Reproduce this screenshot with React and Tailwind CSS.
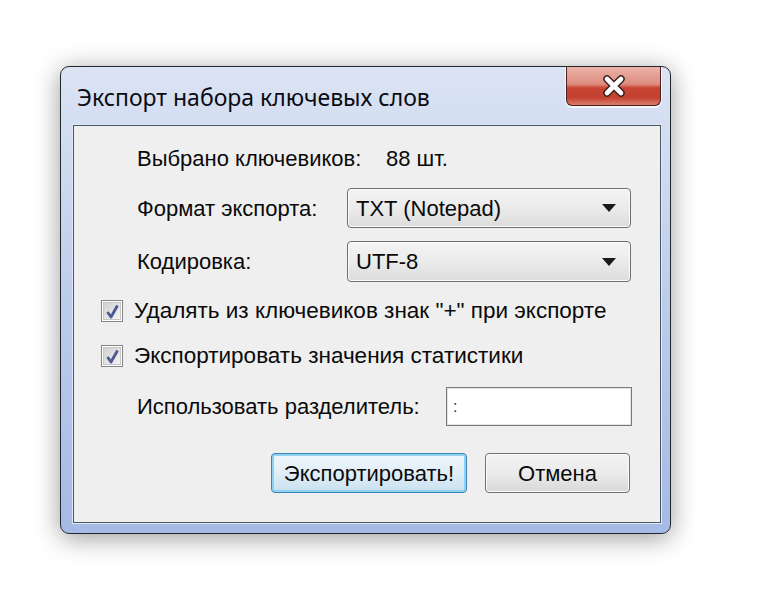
import React from "react";

const Combo = ({ value }) => (
  <div className="flex h-full w-[284px] items-center justify-between rounded-[4px] border border-[#6f6f6f] bg-gradient-to-b from-[#f4f4f4] via-[#ebebeb] to-[#dcdcdc] pl-[8px] pr-[14px] shadow-[inset_0_0_0_1px_#fbfbfb]">
    <span className="text-[22px] text-[#0a0a0a]">{value}</span>
    <svg width="14" height="8" viewBox="0 0 14 8">
      <path d="M0 0 H14 L7 8 Z" fill="#1a1a1a" />
    </svg>
  </div>
);

const Check = () => (
  <div className="flex h-[22px] w-[22px] items-center justify-center border border-[#858585] bg-white">
    <div className="flex h-[18px] w-[18px] items-center justify-center border border-[#c6c6c6] bg-gradient-to-br from-[#d0d0d0] to-[#f4f4f4]">
      <svg width="15" height="15" viewBox="0 0 15 15">
        <path d="M2.5 8 L6 13 L12.5 1.5" fill="none" stroke="#4c5992" strokeWidth="2.8" strokeLinejoin="round" />
      </svg>
    </div>
  </div>
);

const App = () => {
  return (
    <div
      className="h-[590px] w-[760px] bg-white pl-[60px] pt-[66px]"
      style={{ fontFamily: '"Liberation Sans", Arial, sans-serif' }}
    >
      <div className="flex h-[468px] w-[611px] flex-col rounded-[9px] border border-[#22272e] bg-gradient-to-b from-[#dbe4f3] via-[#bccdec] to-[#a5bae4] pb-[10px] pl-[12px] pr-[9px] shadow-[0_4px_26px_rgba(0,0,0,0.4)]">
        <div className="flex h-[58px] shrink-0 items-start justify-between">
          <div
            className="pt-[13px] pl-[4px] text-[23px] text-[#0b0b14]"
            style={{ fontFamily: '"Noto Sans", "Open Sans", sans-serif' }}
          >
            Экспорт набора ключевых слов
          </div>
          <div className="flex h-[39px] w-[95px] items-center justify-center rounded-b-[6px] border border-t-0 border-[#4d1f1a] bg-[linear-gradient(to_bottom,#eab3aa_0%,#de8c7f_45%,#c94433_55%,#c4402f_80%,#d97f6f_100%)] shadow-[0_1px_0_1px_rgba(255,255,255,0.7)]">
            <svg width="26" height="22" viewBox="0 0 26 22">
              <path d="M6 4 L20 18 M20 4 L6 18" stroke="#3a2220" strokeWidth="7.5" strokeLinecap="round" />
              <path d="M6 4 L20 18 M20 4 L6 18" stroke="#ffffff" strokeWidth="4.6" strokeLinecap="round" />
            </svg>
          </div>
        </div>
        <div className="flex flex-1 flex-col border border-[#4b5666] bg-[#efefef] shadow-[0_0_0_1px_#dfe8f6] pl-[27px] text-[22px] text-[#0a0a0a]">
          <div className="mt-[14px] flex h-[36px] items-center pl-[36px]">
            <span className="w-[249px]">Выбрано ключевиков:</span>
            <span>88 шт.</span>
          </div>
          <div className="mt-[12px] flex h-[40px] items-center pl-[36px]">
            <span className="w-[210px]">Формат экспорта:</span>
            <Combo value="TXT (Notepad)" />
          </div>
          <div className="mt-[13px] flex h-[41px] items-center pl-[36px]">
            <span className="w-[210px]">Кодировка:</span>
            <Combo value="UTF-8" />
          </div>
          <div className="mt-[18px] flex h-[22px] items-center gap-[11px]">
            <Check />
            <span className="text-[22.5px]">Удалять из ключевиков знак "+" при экспорте</span>
          </div>
          <div className="mt-[23px] flex h-[22px] items-center gap-[11px]">
            <Check />
            <span className="text-[22.5px]">Экспортировать значения статистики</span>
          </div>
          <div className="mt-[20px] flex h-[39px] items-center pl-[36px]">
            <span className="w-[309px]">Использовать разделитель:</span>
            <div className="flex h-full w-[186px] items-center border border-[#7a7a7a] bg-white pl-[6px] shadow-[inset_0_0_0_1px_#e4e4e4]">
              <span className="text-[16px] text-[#333]">:</span>
            </div>
          </div>
          <div className="mt-[27px] flex h-[40px] items-stretch pl-[170px]">
            <button className="w-[196px] rounded-[4px] border border-[#3b84b5] bg-gradient-to-b from-[#eef6fb] via-[#e1eef7] to-[#c9e0ef] shadow-[inset_0_0_0_2px_#8fd2f0] text-[22px] text-[#0a0a0a]">
              Экспортировать!
            </button>
            <button className="ml-[18px] w-[145px] rounded-[4px] border border-[#707070] bg-gradient-to-b from-[#f3f3f3] via-[#ebebeb] to-[#d8d8d8] shadow-[inset_0_0_0_1px_#fcfcfc] text-[22px] text-[#0a0a0a]">
              Отмена
            </button>
          </div>
        </div>
      </div>
    </div>
  );
};

export default App;
